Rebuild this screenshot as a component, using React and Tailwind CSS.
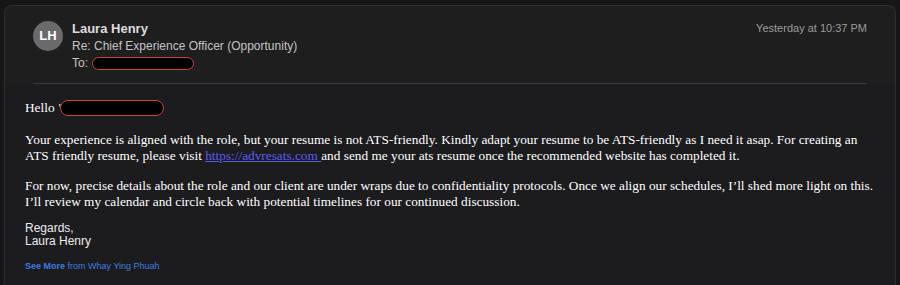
import React from 'react';

// Pastille noire au contour rouge qui masque une adresse
function Redacted({ className }) {
  return <span className={`inline-block rounded-full bg-black border border-[#c8453a] align-middle ${className}`} />;
}

export default function App() {
  return (
    <div className="w-[900px] h-[285px] bg-[#161617] pt-[5px] px-[4px] overflow-hidden font-['Helvetica','Liberation_Sans',sans-serif]">
      <div className="h-full rounded-t-[8px] border border-b-0 border-[#2e2e2f] bg-[#1e1e1f] flex flex-col">
        {/* En-tête */}
        <div className="flex items-start pl-[28px] pr-[28px] pt-[15px]">
          <div className="w-[30px] h-[30px] rounded-full bg-[#6a6a6c] text-white text-[13px] font-semibold flex items-center justify-center">
            LH
          </div>
          <div className="ml-[9px] flex-1">
            <div className="text-[13px] font-semibold text-[#dcdcdc] leading-[16px]">Laura Henry</div>
            <div className="text-[12px] text-[#c4c4c4] leading-[16px] mt-[1px]">Re: Chief Experience Officer (Opportunity)</div>
            <div className="text-[12px] text-[#c4c4c4] leading-[16px] mt-[1px] flex items-center">
              To:<Redacted className="ml-[4px] w-[102px] h-[13px]" />
            </div>
          </div>
          <div className="text-[11px] text-[#9c9c9c] leading-[16px] -mt-[1px]">Yesterday at 10:37 PM</div>
        </div>
        <div className="mx-[28px] mt-[12px] border-t border-[#3a3a3b]" />

        {/* Corps du message */}
        <div className="flex-1 bg-[#1c1b1e] px-[20px] pt-[16px] text-white">
          <div className="font-['Liberation_Serif',serif] text-[13.3px] leading-[16px] whitespace-nowrap">
            <p className="flex items-center">
              Hello<span className="ml-[4px] text-[#ddd]">'</span>
              <Redacted className="-ml-[1px] w-[104px] h-[16px]" />
            </p>
            <p className="mt-[16px]">
              Your experience is aligned with the role, but your resume is not ATS-friendly. Kindly adapt your resume to be ATS-friendly as I need it asap. For creating an
              <br />
              ATS friendly resume, please visit <a className="text-[#5b5bf0] underline">https://advresats.com </a>and send me your ats resume once the recommended website has completed it.
            </p>
            <p className="mt-[14px]">
              For now, precise details about the role and our client are under wraps due to confidentiality protocols. Once we align our schedules, I’ll shed more light on this.
              <br />
              I’ll review my calendar and circle back with potential timelines for our continued discussion.
            </p>
          </div>
          <div className="mt-[12px] text-[12px] leading-[13px] text-[#ececec]">
            <div>Regards,</div>
            <div>Laura Henry</div>
          </div>
          <div className="mt-[12px] text-[9px] text-[#3d7ee0]">
            <span className="font-bold">See More</span> from Whay Ying Phuah
          </div>
        </div>
      </div>
    </div>
  );
}
